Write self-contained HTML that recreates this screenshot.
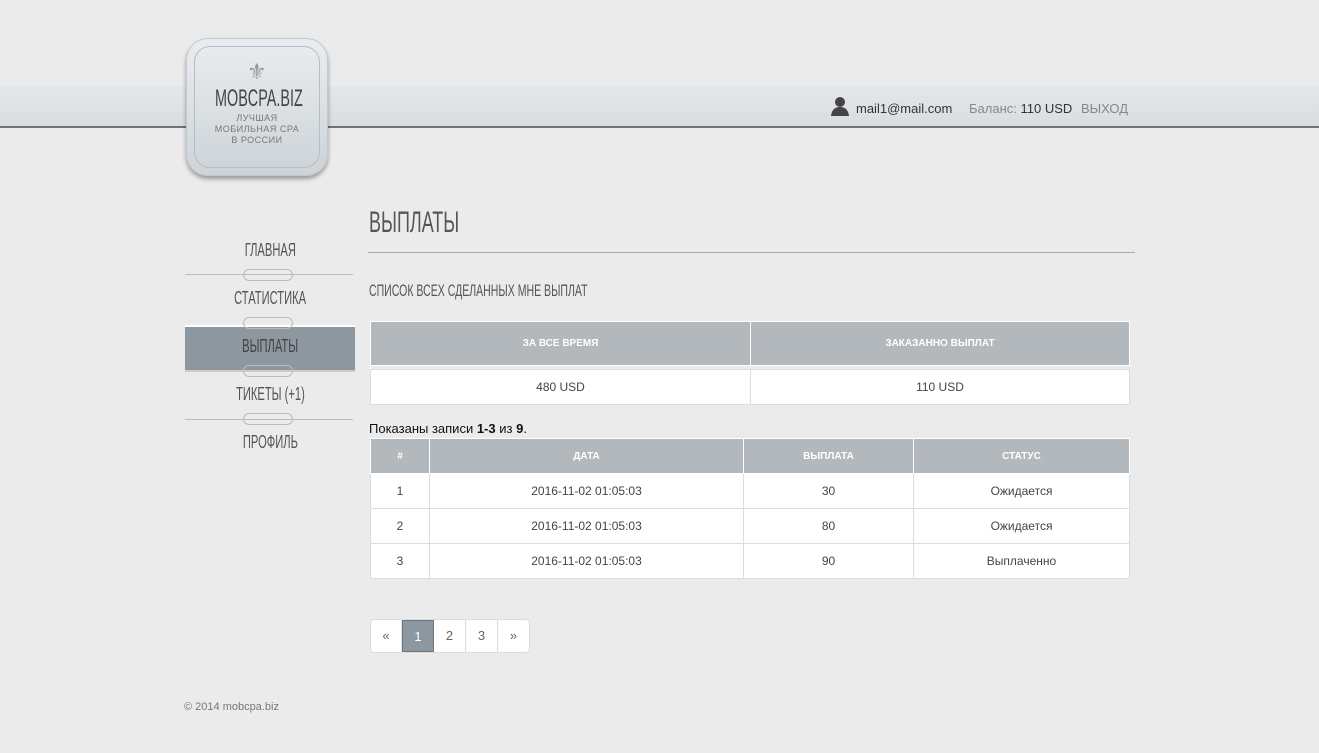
<!DOCTYPE html>
<html><head><meta charset="utf-8"><style>
*{box-sizing:border-box;margin:0;padding:0}
body{width:1319px;height:753px;overflow:hidden;background:#ebebeb;font-family:"Liberation Sans","DejaVu Sans",sans-serif;color:#333;position:relative}
.band{position:absolute;left:0;top:86px;width:1319px;height:42px;background:linear-gradient(#e4e7ea,#d9dde0);border-bottom:2px solid #6e7276}
.cond{display:inline-block;transform:scaleX(.62);transform-origin:left center;font-weight:normal;white-space:nowrap;color:#555}
.logo{position:absolute;left:186px;top:38px;width:142px;height:138px;background:linear-gradient(#e9edf0,#cdd3d7);border-radius:22px;box-shadow:0 3px 4px rgba(0,0,0,.35);border:1px solid #c2c8cc}
.logo .in{position:absolute;left:7px;top:7px;right:7px;bottom:7px;border:1px solid #b7bec3;border-radius:16px}
.logo .t{position:absolute;left:28px;top:46px;font-size:24px;color:#444;transform:scaleX(.6);transform-origin:left;white-space:nowrap}
.logo .s{position:absolute;left:0;right:0;top:74px;text-align:center;font-size:9px;line-height:11px;color:#777;letter-spacing:.5px}
.user{position:absolute;top:101px;font-size:13px}
.nav{position:absolute;left:185px;width:170px;text-align:center;font-size:18px;color:#555}
.nav div{height:48px;line-height:48px}
.sep{position:absolute;left:185px;width:168px;height:1px;background:#bbb}
.orn{position:absolute;left:243px;width:50px;height:12px;border:1px solid #bbb;border-radius:6px}
h1{position:absolute;left:369px;top:206px;font-size:30px}
.hr{position:absolute;left:368px;top:252px;width:767px;height:1px;background:#aaa}
table{border-collapse:collapse;position:absolute;left:370px;background:#fff;font-size:12px;table-layout:fixed}
th{background:#b3b8bd;color:#fff;font-size:10px;font-weight:bold;border:1px solid #fff;text-align:center}
td{border:1px solid #ddd;text-align:center;color:#444}
.pg{position:absolute;left:370px;top:619px;display:flex;border:1px solid #ddd;border-radius:4px;background:#fff;overflow:hidden}
.pg span{width:32px;height:32px;line-height:32px;text-align:center;border-right:1px solid #ddd;color:#666;font-size:13px}
.pg span:last-child{border:none}
</style></head><body>
<div class="band"></div>
<div class="logo"><div class="in"></div><div style="position:absolute;left:60px;top:20px;font-size:22px;color:#999">⚜</div><div class="t">MOBCPA.BIZ</div><div class="s">ЛУЧШАЯ<br>МОБИЛЬНАЯ CPA<br>В РОССИИ</div></div>
<svg style="position:absolute;left:830px;top:96px" width="20" height="20" viewBox="0 0 20 20"><circle cx="10" cy="6" r="5" fill="#444"/><path d="M1 20 Q2 11 10 11 Q18 11 19 20Z" fill="#444"/></svg>
<div class="user" style="left:856px;color:#333">mail1@mail.com</div>
<div class="user" style="left:969px;color:#888">Баланс: <span style="color:#333">110 USD</span></div>
<div class="user" style="left:1081px;color:#888">ВЫХОД</div>

<div style="position:absolute;left:185px;top:325px;width:170px;height:47px;background:#8d979f;border-top:2px solid #fff;border-bottom:2px solid #ccc"></div>
<div class="sep" style="top:274px"></div><div class="sep" style="top:419px"></div>
<div class="orn" style="top:269px"></div><div class="orn" style="top:317px"></div><div class="orn" style="top:365px"></div><div class="orn" style="top:413px"></div>
<div class="nav" style="top:226px"><div><span class="cond" style="transform-origin:center">ГЛАВНАЯ</span></div><div><span class="cond" style="transform-origin:center">СТАТИСТИКА</span></div><div><span class="cond" style="transform-origin:center;color:#444">ВЫПЛАТЫ</span></div><div><span class="cond" style="transform-origin:center">ТИКЕТЫ (+1)</span></div><div><span class="cond" style="transform-origin:center">ПРОФИЛЬ</span></div></div>

<h1><span class="cond" style="transform:scaleX(.6)">ВЫПЛАТЫ</span></h1>
<div class="hr"></div>
<div style="position:absolute;left:369px;top:281px;font-size:17px"><span class="cond">СПИСОК ВСЕХ СДЕЛАННЫХ МНЕ ВЫПЛАТ</span></div>

<table style="top:321px;width:760px">
<tr style="height:44px"><th style="width:380px">ЗА ВСЕ ВРЕМЯ</th><th>ЗАКАЗАННО ВЫПЛАТ</th></tr>
<tr style="height:4px"><td colspan="2" style="background:#ebebeb;border:none"></td></tr>
<tr style="height:35px"><td>480 USD</td><td>110 USD</td></tr>
</table>
<div style="position:absolute;left:369px;top:421px;font-size:13px;color:#111">Показаны записи <b>1-3</b> из <b>9</b>.</div>
<table style="top:438px;width:760px">
<tr style="height:35px"><th style="width:59px">#</th><th style="width:314px">ДАТА</th><th style="width:170px">ВЫПЛАТА</th><th>СТАТУС</th></tr>
<tr style="height:35px"><td>1</td><td>2016-11-02 01:05:03</td><td>30</td><td>Ожидается</td></tr>
<tr style="height:35px"><td>2</td><td>2016-11-02 01:05:03</td><td>80</td><td>Ожидается</td></tr>
<tr style="height:35px"><td>3</td><td>2016-11-02 01:05:03</td><td>90</td><td>Выплаченно</td></tr>
</table>
<div class="pg"><span style="width:31px">«</span><span style="background:#8d979f;color:#fff;border:1px solid #6e777f">1</span><span>2</span><span>3</span><span style="width:31px">»</span></div>
<div style="position:absolute;left:184px;top:701px;font-size:11px;color:#777">© 2014 mobcpa.biz</div>
</body></html>
